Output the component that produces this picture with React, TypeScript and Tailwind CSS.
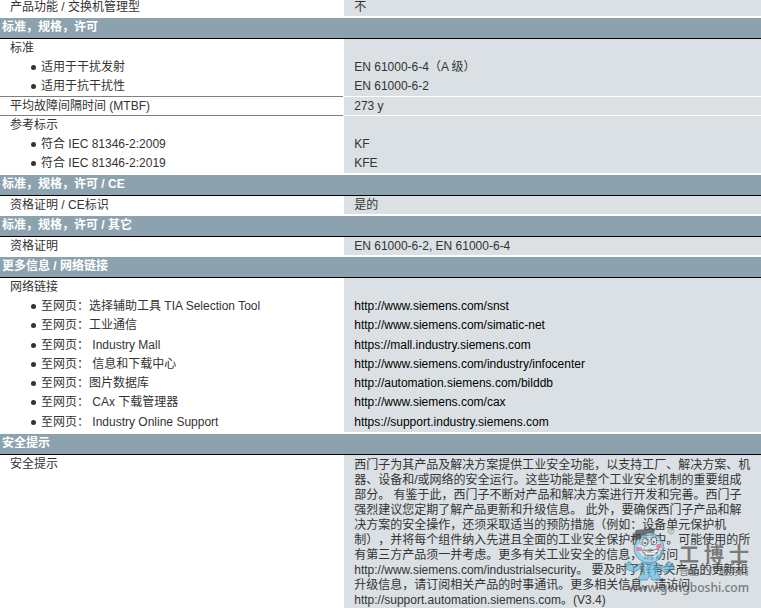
import { Fragment, type ReactNode } from "react";

type Row = {
  label: string;
  value?: string;
  href?: string;
  bullet?: boolean;
};

type Section = {
  title?: string;
  groups: Row[][];
  tall?: boolean;
};

const NOTICE =
  "西门子为其产品及解决方案提供工业安全功能，以支持工厂、解决方案、机器、设备和/或网络的安全运行。这些功能是整个工业安全机制的重要组成部分。 有鉴于此，西门子不断对产品和解决方案进行开发和完善。西门子强烈建议您定期了解产品更新和升级信息。 此外，要确保西门子产品和解决方案的安全操作，还须采取适当的预防措施（例如：设备单元保护机制），并将每个组件纳入先进且全面的工业安全保护机制中。可能使用的所有第三方产品须一并考虑。更多有关工业安全的信息，请访问 http://www.siemens.com/industrialsecurity。 要及时了解有关产品的更新和升级信息，请订阅相关产品的时事通讯。更多相关信息，请访问 http://support.automation.siemens.com。(V3.4)";

const sections: Section[] = [
  { groups: [[{ label: "产品功能 / 交换机管理型", value: "不" }]] },
  {
    title: "标准，规格，许可",
    groups: [
      [
        { label: "标准" },
        { label: "适用于干扰发射", value: "EN 61000-6-4（A 级）", bullet: true },
        { label: "适用于抗干扰性", value: "EN 61000-6-2", bullet: true },
      ],
      [{ label: "平均故障间隔时间 (MTBF)", value: "273 y" }],
      [
        { label: "参考标示" },
        { label: "符合 IEC 81346-2:2009", value: "KF", bullet: true },
        { label: "符合 IEC 81346-2:2019", value: "KFE", bullet: true },
      ],
    ],
  },
  {
    title: "标准，规格，许可 / CE",
    groups: [[{ label: "资格证明 / CE标识", value: "是的" }]],
  },
  {
    title: "标准，规格，许可 / 其它",
    groups: [[{ label: "资格证明", value: "EN 61000-6-2, EN 61000-6-4" }]],
  },
  {
    title: "更多信息 / 网络链接",
    tall: true,
    groups: [
      [
        { label: "网络链接" },
        { label: "至网页：选择辅助工具 TIA Selection Tool", href: "http://www.siemens.com/snst", bullet: true },
        { label: "至网页：工业通信", href: "http://www.siemens.com/simatic-net", bullet: true },
        { label: "至网页： Industry Mall", href: "https://mall.industry.siemens.com", bullet: true },
        { label: "至网页： 信息和下载中心", href: "http://www.siemens.com/industry/infocenter", bullet: true },
        { label: "至网页：图片数据库", href: "http://automation.siemens.com/bilddb", bullet: true },
        { label: "至网页： CAx 下载管理器", href: "http://www.siemens.com/cax", bullet: true },
        { label: "至网页： Industry Online Support", href: "https://support.industry.siemens.com", bullet: true },
      ],
    ],
  },
];

function SectionTitle({ children }: { children: ReactNode }) {
  return (
    <tr>
      <th
        colSpan={2}
        scope="colgroup"
        className="h-[23px] border-t-2 border-b border-t-white border-b-black bg-[#8ca2ae] bg-clip-padding pb-0.5 pl-0.5 text-left leading-[18px] font-bold text-white"
      >
        {children}
      </th>
    </tr>
  );
}

function rowHeight(row: Row, divider: boolean, tall?: boolean) {
  if (tall) return "h-[19px] nth-[4n]:h-5";
  if (row.bullet) return divider ? "h-5" : "h-[19px]";
  return row.value ? "h-[18px]" : "h-[19px]";
}

function SpecRow({ row, divider, tall }: { row: Row; divider: boolean; tall?: boolean }) {
  return (
    <tr className={rowHeight(row, divider, tall)}>
      <th
        scope="row"
        className={`pl-2.5 text-left align-top font-normal ${divider ? "border-b border-[#808080]" : ""}`}
      >
        <span className={`flex items-center ${row.bullet ? "pl-[21px]" : ""}`}>
          {row.bullet && <span className="mr-[5px] size-[5px] rounded-full bg-[#333]" />}
          <span className="whitespace-pre">{row.label}</span>
        </span>
      </th>
      <td
        className={`border-l border-white bg-[#dae0e4] bg-clip-padding pl-2.5 align-top ${divider ? "border-b" : ""}`}
      >
        {row.href ? (
          <a href={row.href} className="text-black">
            {row.href}
          </a>
        ) : (
          row.value
        )}
      </td>
    </tr>
  );
}

function Mascot() {
  return (
    <svg viewBox="0 0 52 60" className="h-[60px] w-[52px] shrink-0" fill="none" aria-hidden="true">
      {/* arms */}
      <path d="M17 41 L9 46 L2 43 M9 46 L4 40" stroke="#47728a" strokeWidth="5" strokeLinecap="round" />
      <path d="M17 41 L9 46 L2 43 M9 46 L4 40" stroke="#5cc0ea" strokeWidth="3" strokeLinecap="round" />
      <path d="M31 41 L40 46 L47 43 M40 46 L44 40" stroke="#47728a" strokeWidth="5" strokeLinecap="round" />
      <path d="M31 41 L40 46 L47 43 M40 46 L44 40" stroke="#5cc0ea" strokeWidth="3" strokeLinecap="round" />
      {/* body and legs */}
      <path
        d="M18 38 Q24 42 31 38 L33 49 Q36 54 35 56 H27 L25 51 L22 56 H13 Q13 53 17 49Z"
        fill="#5cc0ea"
        stroke="#47728a"
      />
      <path d="M21 41 Q20 46 21 50" stroke="#c2e9f8" strokeWidth="2" />
      {/* head */}
      <circle cx="24" cy="24" r="15" fill="#6cc9ef" stroke="#47728a" />
      <ellipse cx="25" cy="23" rx="12" ry="11" fill="#d3e8f1" />
      <ellipse cx="20" cy="18" rx="3" ry="4" fill="#fff" stroke="#555" />
      <ellipse cx="29" cy="17" rx="3" ry="4" fill="#fff" stroke="#555" />
      <circle cx="20" cy="19" r="1" fill="#222" />
      <circle cx="29" cy="18" r="1" fill="#222" />
      <ellipse cx="14" cy="25" rx="3" ry="2" fill="#f04c8b" />
      <ellipse cx="34" cy="22" rx="3" ry="2" fill="#f04c8b" />
      <path d="M17 26 Q25 29 34 24 Q32 32 25 32 Q19 32 17 26Z" fill="#fff" stroke="#555" />
      {/* cap */}
      <path d="M11 6 L31 4 L29 9 L22 9 L17 12 L16 15 L11 16 L8 12Z" fill="#33373b" />
      <circle cx="46" cy="7" r="3" stroke="#888" />
      <path d="M45 9 V5 H46 Q48 6 46 7 H45 M46 7 L47 9" stroke="#888" strokeWidth=".6" />
    </svg>
  );
}

function Watermark() {
  return (
    <div className="pointer-events-none absolute right-3 bottom-3 flex flex-col text-[#444] opacity-65">
      <div className="flex gap-0.5">
        <Mascot />
        <div className="flex flex-col pt-5">
          <p className="flex gap-[5px] font-['Liberation_Serif','Noto_Sans_CJK_SC',serif] text-xl leading-[22px] font-bold">
            <span>工</span>
            <span>博</span>
            <span>士</span>
          </p>
          <p className="text-[10px] leading-3 whitespace-nowrap">智能工厂服务商</p>
        </div>
      </div>
      <p className="-mt-1 text-right font-['Noto_Sans',sans-serif] text-xs leading-4 font-medium">www.gongboshi.com</p>
    </div>
  );
}

export default function App() {
  return (
    <main className="relative h-screen overflow-hidden bg-white font-['Liberation_Sans','Noto_Sans_CJK_SC',sans-serif] text-xs leading-[18px] text-[#333] [text-spacing-trim:space-all]">
      <table lang="zh-CN" className="-mt-0.5 w-full table-fixed border-separate border-spacing-0">
        <colgroup>
          <col className="w-[45.1%]" />
          <col />
        </colgroup>
        {sections.map((section, i) => (
          <tbody key={i}>
            {section.title && <SectionTitle>{section.title}</SectionTitle>}
            {section.groups.map((group, g) => (
              <Fragment key={g}>
                {group.map((row, r) => (
                  <SpecRow
                    key={row.label}
                    row={row}
                    tall={section.tall}
                    divider={r === group.length - 1 && g < section.groups.length - 1}
                  />
                ))}
              </Fragment>
            ))}
          </tbody>
        ))}
        <tbody>
          <SectionTitle>安全提示</SectionTitle>
          <tr>
            <th scope="row" className="pl-2.5 text-left align-top font-normal">
              安全提示
            </th>
            <td className="border-l border-white bg-[#dae0e4] bg-clip-padding pt-[3px] pr-2 pb-2 pl-2.5 leading-[15px]">
              {NOTICE}
            </td>
          </tr>
        </tbody>
      </table>
      <Watermark />
    </main>
  );
}
